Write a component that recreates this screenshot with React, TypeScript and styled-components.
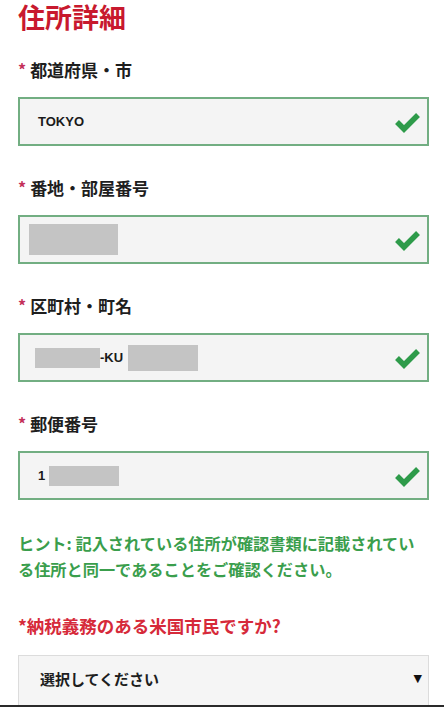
import styled, { createGlobalStyle } from "styled-components";

const GlobalStyle = createGlobalStyle`
  html, body {
    margin: 0;
    padding: 0;
    background: #ffffff;
  }
  body {
    font-family: "Noto Sans CJK JP", "Noto Sans", sans-serif;
  }
`;

const CheckIcon = () => (
  <svg width="27" height="22" viewBox="0 0 27 22">
    <polyline
      points="3,11 10,18 24,4"
      fill="none"
      stroke="#2e9b4a"
      strokeWidth="5.5"
    />
  </svg>
);

type Redact = { w: number; h: number };

const Field = ({
  label,
  children,
}: {
  label: string;
  children: React.ReactNode;
}) => (
  <StyledField>
    <StyledLabel>
      <StyledStar>*</StyledStar>
      {label}
    </StyledLabel>
    <StyledInput>
      <StyledValue>{children}</StyledValue>
      <CheckIcon />
    </StyledInput>
  </StyledField>
);

const Box = ({ w, h, ml = 0 }: Redact & { ml?: number }) => (
  <StyledRedact $w={w} $h={h} $ml={ml} />
);

const App = () => {
  return (
    <StyledPage>
      <GlobalStyle />
      <StyledContent>
        <StyledTitle>住所詳細</StyledTitle>

        <Field label="都道府県・市">TOKYO</Field>

        <Field label="番地・部屋番号">
          <Box w={89} h={31} ml={-9} />
        </Field>

        <Field label="区町村・町名">
          <Box w={65} h={20} ml={-3} />
          -KU
          <Box w={70} h={26} ml={5} />
        </Field>

        <Field label="郵便番号">
          1
          <Box w={70} h={20} ml={4} />
        </Field>

        <StyledHint>
          ヒント: 記入されている住所が確認書類に記載されてい
          <br />
          る住所と同一であることをご確認ください。
        </StyledHint>

        <StyledQuestion>*納税義務のある米国市民ですか?</StyledQuestion>

        <StyledSelect>
          <span>選択してください</span>
          <StyledArrow>▼</StyledArrow>
        </StyledSelect>
      </StyledContent>
      <StyledBottomBar />
    </StyledPage>
  );
};

export default App;

const StyledPage = styled.div`
  width: 444px;
  height: 707px;
  display: flex;
  flex-direction: column;
  overflow: hidden;
`;

const StyledContent = styled.div`
  flex: 1;
  overflow: hidden;
  padding: 0 15px 0 18px;
`;

const StyledTitle = styled.h1`
  margin: 0 0 24px;
  font-size: 27px;
  line-height: 34px;
  font-weight: 700;
  color: #c8192e;
`;

const StyledField = styled.div`
  margin-bottom: 30px;
`;

const StyledLabel = styled.div`
  display: flex;
  align-items: center;
  font-size: 17px;
  line-height: 24px;
  font-weight: 700;
  color: #1e1e1e;
  margin-bottom: 15px;
`;

const StyledStar = styled.span`
  color: #c4305a;
  font-size: 16px;
  margin-right: 4px;
  position: relative;
  top: -1px;
`;

const StyledInput = styled.div`
  box-sizing: border-box;
  height: 49px;
  border: 2px solid #72ae82;
  background: #f4f4f4;
  display: flex;
  align-items: center;
  justify-content: space-between;
  padding: 0 6px 0 18px;
`;

const StyledValue = styled.div`
  display: flex;
  align-items: center;
  font-family: "Liberation Sans", Arial, sans-serif;
  font-size: 13px;
  font-weight: 700;
  color: #1a1a1a;
`;

const StyledRedact = styled.span<{ $w: number; $h: number; $ml: number }>`
  display: inline-block;
  width: ${(p) => p.$w}px;
  height: ${(p) => p.$h}px;
  margin-left: ${(p) => p.$ml}px;
  background: #c4c4c4;
`;

const StyledHint = styled.p`
  margin: 0 0 32px;
  font-size: 16.2px;
  line-height: 26px;
  font-weight: 700;
  color: #3a9e4c;
  white-space: nowrap;
`;

const StyledQuestion = styled.div`
  font-size: 17.5px;
  line-height: 24px;
  font-weight: 700;
  color: #d62a3a;
  margin-bottom: 17px;
`;

const StyledSelect = styled.div`
  box-sizing: border-box;
  height: 52px;
  border: 1px solid #dcdcdc;
  background: #f5f5f5;
  display: flex;
  align-items: center;
  justify-content: space-between;
  padding: 0 6px 6px 21px;
  font-size: 15px;
  font-weight: 700;
  color: #1e1e1e;
`;

const StyledArrow = styled.span`
  font-family: "DejaVu Sans", sans-serif;
  font-size: 11px;
  color: #111;
`;

const StyledBottomBar = styled.div`
  height: 2px;
  background: #2a2a2a;
`;
